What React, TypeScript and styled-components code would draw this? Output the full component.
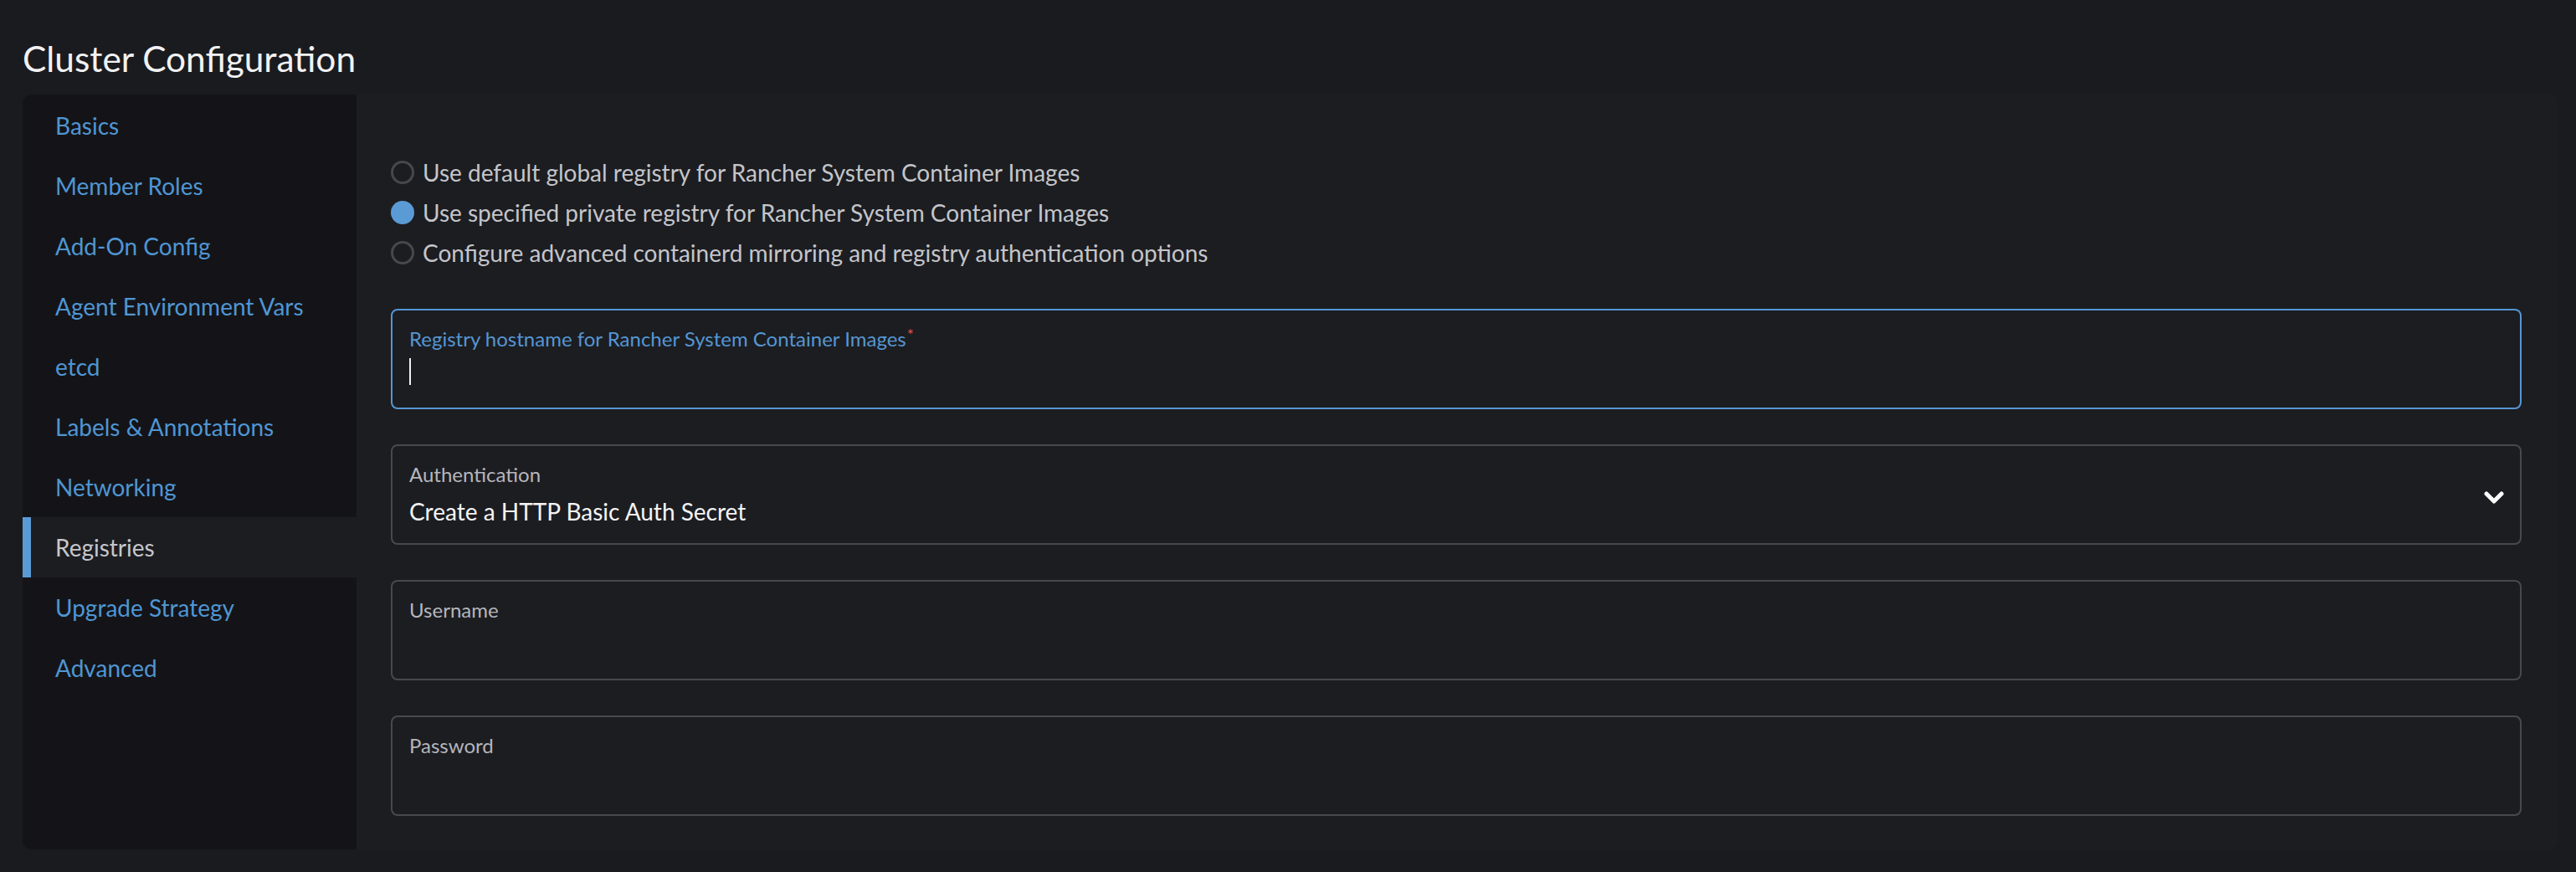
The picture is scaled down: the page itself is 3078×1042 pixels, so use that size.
import React from 'react';
import styled, { createGlobalStyle } from 'styled-components';

const GlobalStyle = createGlobalStyle`
  html, body {
    margin:0;
    padding:0;
    background:#1a1b1f;
    font-family:Lato, "Open Sans", sans-serif;
  }
`;

const Page = styled.div`
  padding:0 21px 27px 27px;
  box-sizing:border-box;
  width:3078px;
`;

const Title = styled.h1`
  margin:0;
  padding-top:44px;
  height:69px;
  font-size:42.4px;
  font-weight:400;
  line-height:normal;
  color:#f2f2f3;
`;

const Frame = styled.div`
  display:flex;
  height:902px;
  background:#1c1d21;
  border-radius:10px;
`;

const SideNav = styled.nav`
  width:399px;
  flex-shrink:0;
  background:#141418;
  border-radius:10px 0 0 10px;
  padding-top:1px;
  box-sizing:border-box;
`;

const NavItem = styled.div<{ $active?: boolean }>`
  height:72px;
  line-height:72px;
  padding-left:39px;
  font-size:28px;
  color:${p => (p.$active ? '#c6c7cc' : '#4f96d4')};
  background:${p => (p.$active ? '#1c1d21' : 'transparent')};
  box-shadow:${p => (p.$active ? 'inset 10px 0 0 #5b9bd5' : 'none')};
  white-space:nowrap;
`;

const Content = styled.div`
  flex:1;
  padding:69px 44px 0 41px;
  display:flex;
  flex-direction:column;
`;

const RadioGroup = styled.div`
  display:flex;
  flex-direction:column;
  margin-bottom:43px;
`;

const RadioRow = styled.label`
  display:flex;
  align-items:center;
  gap:10px;
  height:48px;
  font-size:28px;
  color:#c4c5ca;
`;

const RadioDot = styled.span<{ $checked?: boolean }>`
  width:28px;
  height:28px;
  box-sizing:border-box;
  border-radius:50%;
  border:${p => (p.$checked ? 'none' : '3px solid #47484d')};
  background:${p => (p.$checked ? '#5b9bd5' : 'transparent')};
  flex-shrink:0;
`;

const Fields = styled.div`
  display:flex;
  flex-direction:column;
  gap:42px;
`;

const Field = styled.div<{ $focused?: boolean }>`
  position:relative;
  height:120px;
  box-sizing:border-box;
  border:2px solid ${p => (p.$focused ? '#5596d2' : '#48494e')};
  border-radius:8px;
  padding:19px 20px 0 20px;
`;

const FieldLabel = styled.div<{ $focused?: boolean }>`
  font-size:24px;
  line-height:normal;
  color:${p => (p.$focused ? '#5596d2' : '#b5b6bc')};
`;

const Required = styled.span`
  color:#e0504b;
  font-size:19px;
  vertical-align:top;
  position:relative;
  top:-2px;
  margin-left:1px;
`;

const Caret = styled.div`
  width:2px;
  height:32px;
  margin-top:9px;
  background:#f0f0f0;
`;

const Value = styled.div`
  margin-top:13px;
  font-size:28px;
  line-height:normal;
  color:#f4f4f5;
`;

const Chevron = styled.svg`
  position:absolute;
  right:19px;
  top:54px;
  width:24px;
  height:16px;
`;

const navItems = [
  'Basics',
  'Member Roles',
  'Add-On Config',
  'Agent Environment Vars',
  'etcd',
  'Labels & Annotations',
  'Networking',
  'Registries',
  'Upgrade Strategy',
  'Advanced',
];

const radios = [
  { label: 'Use default global registry for Rancher System Container Images', checked: false },
  { label: 'Use specified private registry for Rancher System Container Images', checked: true },
  { label: 'Configure advanced containerd mirroring and registry authentication options', checked: false },
];

function App() {
  return (
    <Page>
      <GlobalStyle />
      <Title>Cluster Configuration</Title>
      <Frame>
        <SideNav>
          {navItems.map(item => (
            <NavItem key={item} $active={item === 'Registries'}>{item}</NavItem>
          ))}
        </SideNav>
        <Content>
          <RadioGroup>
            {radios.map(r => (
              <RadioRow key={r.label}>
                <RadioDot $checked={r.checked} />
                {r.label}
              </RadioRow>
            ))}
          </RadioGroup>
          <Fields>
            <Field $focused>
              <FieldLabel $focused>
                Registry hostname for Rancher System Container Images<Required>*</Required>
              </FieldLabel>
              <Caret />
            </Field>
            <Field>
              <FieldLabel>Authentication</FieldLabel>
              <Value>Create a HTTP Basic Auth Secret</Value>
              <Chevron viewBox="0 0 24 16">
                <polyline points="3,3 12,12 21,3" fill="none" stroke="#ffffff" strokeWidth="5" strokeLinecap="round" strokeLinejoin="round" />
              </Chevron>
            </Field>
            <Field>
              <FieldLabel>Username</FieldLabel>
            </Field>
            <Field>
              <FieldLabel>Password</FieldLabel>
            </Field>
          </Fields>
        </Content>
      </Frame>
    </Page>
  );
}

export default App;
